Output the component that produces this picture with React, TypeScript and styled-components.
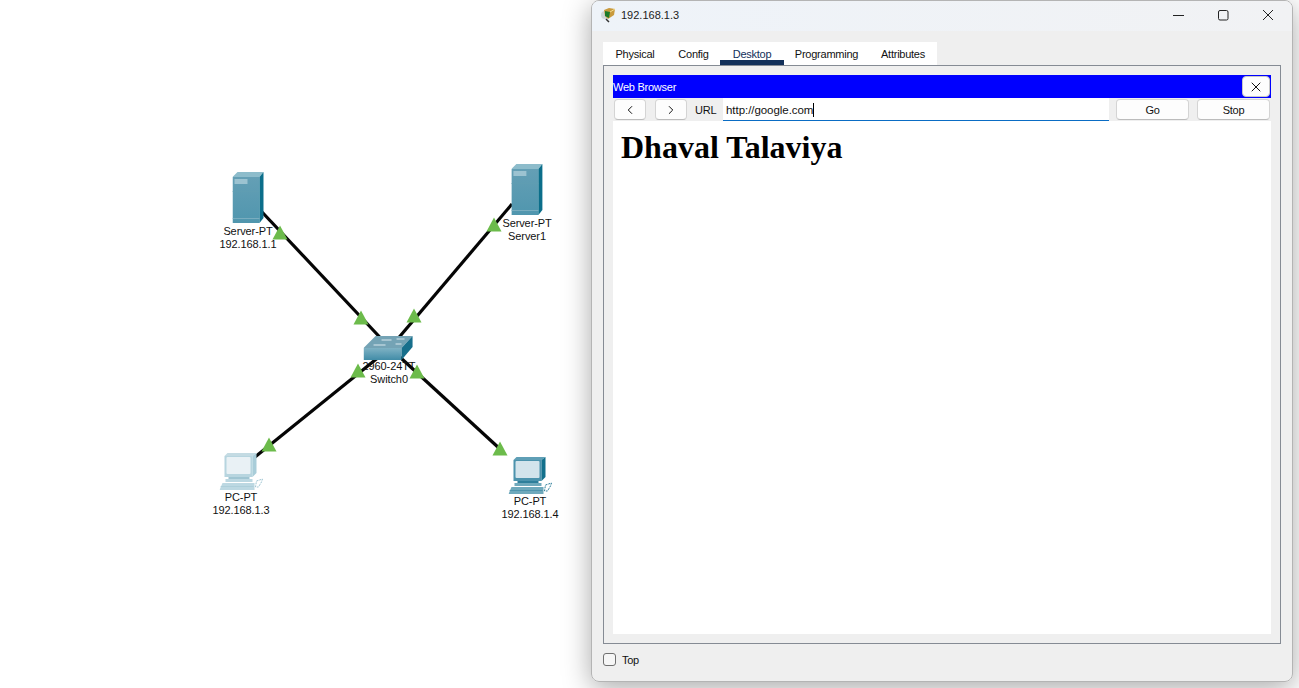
import React from "react";
import styled, { createGlobalStyle } from "styled-components";
import { ChevronLeft, ChevronRight, X } from "lucide-react";

const GlobalStyle = createGlobalStyle`
  html, body {
    margin: 0;
    padding: 0;
    background: #fff;
    overflow: hidden;
  }
  * { box-sizing: border-box; }
`;

const Desktop = styled.div`
  position: relative;
  width: 1299px;
  height: 688px;
  overflow: hidden;
  background: #fff;
  font-family: "Liberation Sans", Arial, sans-serif;
  font-size: 11px;
  letter-spacing: -0.25px;
  color: #111;
`;

/* ---------- network diagram ---------- */

const Overlay = styled.svg`
  position: absolute;
  left: 0;
  top: 0;
  width: 591px;
  height: 688px;
`;

const Node = styled.div<{ $x: number; $y: number }>`
  position: absolute;
  left: ${(p) => p.$x}px;
  top: ${(p) => p.$y}px;
  display: flex;
  flex-direction: column;
  align-items: center;
  transform: translateX(-50%);
  white-space: nowrap;
`;

const NodeLabel = styled.div<{ $gap?: number }>`
  font-size: 11px;
  line-height: 12.5px;
  text-align: center;
  letter-spacing: -0.1px;
  margin-top: ${(p) => p.$gap ?? 0}px;
`;

const ServerIcon = () => (
  <svg width="32" height="52" viewBox="0 0 32 52">
    <defs>
      <linearGradient id="srvFace" x1="0" y1="0" x2="0" y2="1">
        <stop offset="0" stopColor="#649fb5" />
        <stop offset="1" stopColor="#5096ae" />
      </linearGradient>
    </defs>
    <polygon points="0,5 5,0 31,0 27,5" fill="#8dbccb" />
    <rect x="0" y="5" width="27" height="46" fill="url(#srvFace)" />
    <polygon points="27,5 31,0 31,46 27,51" fill="#0b6e8a" />
    <rect x="2" y="7" width="13" height="5" fill="#9cc3d1" />
    <rect x="0" y="19" width="27" height="1" fill="#5f9db2" />
    <rect x="0" y="46" width="27" height="1" fill="#79adbf" />
  </svg>
);

const SwitchIcon = () => (
  <svg width="50" height="26" viewBox="0 0 50 26">
    <defs>
      <linearGradient id="swFace" x1="0" y1="0" x2="0" y2="1">
        <stop offset="0" stopColor="#7fb2c4" />
        <stop offset="1" stopColor="#418ca7" />
      </linearGradient>
    </defs>
    <polygon points="12,1 49,1 38,13 0,13" fill="#74a3b5" />
    <rect x="0" y="13" width="38" height="12" fill="url(#swFace)" />
    <polygon points="38,13 49,1 49,12 38,25" fill="#176f8c" />
    <path d="M18 5h10M33 4h8M10 10h12M32 9h6" stroke="#d9e8ee" strokeWidth="1" fill="none" />
  </svg>
);

const PcIcon = ({ faded }: { faded?: boolean }) => {
  const c = faded
    ? { top: "#c4dbe3", side: "#a9cdd9", frame: "#b7d5df", screen: "#e9f1f5", base: "#bcd8e2", dark: "#9fc5d2" }
    : { top: "#5f9fb6", side: "#12708c", frame: "#4c93ad", screen: "#d3e4ec", base: "#6fa9bc", dark: "#2f7f9b" };
  return (
    <svg width="44" height="38" viewBox="0 0 44 38">
      <polygon points="5,3 8,0 37,0 33,3" fill={c.top} />
      <rect x="5" y="3" width="28" height="21" fill={c.frame} />
      <polygon points="33,3 37,0 37,20 33,24" fill={c.side} />
      <rect x="7" y="4" width="24" height="17" rx="1" fill={c.screen} />
      <rect x="9" y="24" width="21" height="2" fill={c.dark} />
      <rect x="6" y="26" width="27" height="3" fill={c.base} />
      <polygon points="3,30 35,30 35,37 0,37" fill={c.base} />
      <rect x="1" y="33" width="33" height="1" fill={c.dark} opacity="0.5" />
      <path d="M37 28l6-2-1 3-3 5h-3z" fill="#fff" stroke={c.dark} strokeWidth="1" strokeDasharray="2 1" />
    </svg>
  );
};

/* ---------- simulator window ---------- */

const Window = styled.div`
  position: absolute;
  left: 591px;
  top: 0;
  width: 702px;
  height: 682px;
  display: flex;
  flex-direction: column;
  background: #efefef;
  border: 1px solid #b4b4b4;
  border-radius: 8px;
  overflow: hidden;
`;

const WindowShadow = styled.div`
  position: absolute;
  left: 591px;
  top: 0;
  width: 702px;
  height: 682px;
  border-radius: 8px;
  box-shadow: 0 6px 28px rgba(0, 0, 0, 0.34);
`;

const TitleBar = styled.div`
  height: 30px;
  flex: none;
  display: flex;
  align-items: center;
  padding: 0 0 2px 8px;
  background: linear-gradient(90deg, #eef3f9, #f1f2f4);
`;

const TitleText = styled.span`
  margin-left: 5px;
  letter-spacing: 0;
  color: #222;
`;

const WindowControls = styled.div`
  margin-left: auto;
  display: flex;
  align-items: center;
  height: 100%;
  padding-right: 15px;
  gap: 28px;
`;

const Body = styled.div`
  flex: 1;
  display: flex;
  flex-direction: column;
  padding: 11px 11px 0 11px;
`;

const TabStrip = styled.div`
  align-self: flex-start;
  display: flex;
  height: 23px;
  background: #fff;
`;

const Tab = styled.div<{ $active?: boolean; $w: number }>`
  width: ${(p) => p.$w}px;
  padding-top: 6px;
  text-align: center;
  line-height: 13px;
  border-bottom: 5px solid ${(p) => (p.$active ? "#12305a" : "transparent")};
  color: ${(p) => (p.$active ? "#12305a" : "#111")};
`;

const TabPanel = styled.div`
  height: 579px;
  display: flex;
  flex-direction: column;
  padding: 9px;
  border: 1px solid #858b94;
`;

const BrowserHeader = styled.div`
  height: 23px;
  flex: none;
  display: flex;
  align-items: center;
  justify-content: space-between;
  padding-right: 1px;
  background: #0000ff;
  color: #fff;
`;

const CloseButton = styled.div`
  width: 28px;
  height: 21px;
  display: flex;
  align-items: center;
  justify-content: center;
  background: #fdfdfd;
  border: 1px solid #c8c8c8;
  border-radius: 4px;
  color: #111;
`;

const Toolbar = styled.div`
  height: 23px;
  flex: none;
  display: flex;
  align-items: center;
  padding: 0 1px;
`;

const ToolButton = styled.div<{ $w: number; $gap: number }>`
  width: ${(p) => p.$w}px;
  height: 21px;
  flex: none;
  margin-right: ${(p) => p.$gap}px;
  display: flex;
  align-items: center;
  justify-content: center;
  background: #fdfdfd;
  border: 1px solid #d4d4d4;
  border-bottom-color: #bcbcbc;
  border-radius: 4px;
`;

const UrlLabel = styled.span`
  width: 36px;
  padding-left: 8px;
  flex: none;
`;

const UrlField = styled.div`
  width: 386px;
  height: 23px;
  flex: none;
  margin-right: 7px;
  display: flex;
  align-items: center;
  padding: 1px 0 0 3px;
  background: #fff;
  border-bottom: 1px solid #0a6cc4;
  font-size: 11.5px;
  letter-spacing: -0.05px;
`;

const Caret = styled.span`
  display: inline-block;
  width: 1px;
  height: 14px;
  background: #000;
`;

const Page = styled.div`
  flex: 1;
  padding: 8px;
  background: #fff;
`;

const Heading = styled.h1`
  margin: 0;
  font-family: "Liberation Serif", "Times New Roman", serif;
  font-size: 32px;
  line-height: 37px;
  letter-spacing: 0;
  font-weight: 700;
  color: #000;
`;

const Footer = styled.div`
  flex: 1;
  display: flex;
  align-items: center;
  gap: 6px;
  padding-bottom: 6px;
`;

const Check = styled.span`
  width: 13px;
  height: 13px;
  background: #f6f6f6;
  border: 1px solid #707070;
  border-radius: 3px;
`;

const links = [
  "M262 212L390 348",
  "M512 204L390 348",
  "M255 457L390 348",
  "M500 449L390 348",
];

const lights: [number, number][] = [
  [280, 233],
  [361, 318],
  [414, 316],
  [494, 225],
  [358, 371],
  [417, 372],
  [269, 445],
  [500, 449],
];

const App = () => {
  return (
    <Desktop>
      <GlobalStyle />
      <Overlay viewBox="0 0 591 688">
        {links.map((d) => (
          <path key={d} d={d} stroke="#050505" strokeWidth="3.2" fill="none" />
        ))}
      </Overlay>

      <Node $x={248} $y={172}>
        <ServerIcon />
        <NodeLabel $gap={1}>
          Server-PT
          <br />
          192.168.1.1
        </NodeLabel>
      </Node>
      <Node $x={527} $y={164}>
        <ServerIcon />
        <NodeLabel $gap={1}>
          Server-PT
          <br />
          Server1
        </NodeLabel>
      </Node>
      <Node $x={389} $y={335}>
        <SwitchIcon />
        <NodeLabel $gap={-1}>
          2960-24TT
          <br />
          Switch0
        </NodeLabel>
      </Node>
      <Node $x={241} $y={453}>
        <PcIcon faded />
        <NodeLabel>
          PC-PT
          <br />
          192.168.1.3
        </NodeLabel>
      </Node>
      <Node $x={530} $y={457}>
        <PcIcon />
        <NodeLabel>
          PC-PT
          <br />
          192.168.1.4
        </NodeLabel>
      </Node>

      <Overlay viewBox="0 0 591 688">
        {lights.map(([x, y]) => (
          <polygon key={`${x}-${y}`} points={`${x},${y - 7.5} ${x + 7.5},${y + 6.5} ${x - 7.5},${y + 6.5}`} fill="#6cbb4b" />
        ))}
      </Overlay>

      <WindowShadow />
      <Window>
        <TitleBar>
          <svg width="16" height="16" viewBox="0 0 16 16">
            <circle cx="5" cy="8" r="4" fill="#cfd6d8" />
            <path d="M6 12l3 3" stroke="#333" strokeWidth="1.5" />
            <polygon points="4,3 9,1 15,2 14,8 8,12 5,9" fill="#c99a3c" />
            <polygon points="5,4 10,5 9,11 5,9" fill="#1c7a28" />
            <path d="M10 5l5-3" stroke="#f2dc8f" strokeWidth="1" />
          </svg>
          <TitleText>192.168.1.3</TitleText>
          <WindowControls>
            <svg width="17" height="16" viewBox="0 0 17 16">
              <path d="M3 8.5h11" stroke="#222" strokeWidth="1" />
            </svg>
            <svg width="17" height="16" viewBox="0 0 17 16">
              <rect x="3.5" y="3.5" width="9.5" height="9.5" rx="1.5" fill="none" stroke="#222" strokeWidth="1" />
            </svg>
            <svg width="17" height="16" viewBox="0 0 17 16">
              <path d="M3 3l10 10M13 3L3 13" stroke="#222" strokeWidth="1" />
            </svg>
          </WindowControls>
        </TitleBar>
        <Body>
          <TabStrip>
            <Tab $w={64}>Physical</Tab>
            <Tab $w={53}>Config</Tab>
            <Tab $w={64} $active>
              Desktop
            </Tab>
            <Tab $w={85}>Programming</Tab>
            <Tab $w={68}>Attributes</Tab>
          </TabStrip>
          <TabPanel>
            <BrowserHeader>
              <span>Web Browser</span>
              <CloseButton>
                <X size={16} strokeWidth={1.5} />
              </CloseButton>
            </BrowserHeader>
            <Toolbar>
              <ToolButton $w={32} $gap={9}>
                <ChevronLeft size={14} strokeWidth={1.7} />
              </ToolButton>
              <ToolButton $w={32} $gap={0}>
                <ChevronRight size={14} strokeWidth={1.7} />
              </ToolButton>
              <UrlLabel>URL</UrlLabel>
              <UrlField>
                http://google.com
                <Caret />
              </UrlField>
              <ToolButton $w={73} $gap={8}>
                Go
              </ToolButton>
              <ToolButton $w={73} $gap={0}>
                Stop
              </ToolButton>
            </Toolbar>
            <Page>
              <Heading>Dhaval Talaviya</Heading>
            </Page>
          </TabPanel>
          <Footer>
            <Check />
            <span>Top</span>
          </Footer>
        </Body>
      </Window>
    </Desktop>
  );
};

export default App;
